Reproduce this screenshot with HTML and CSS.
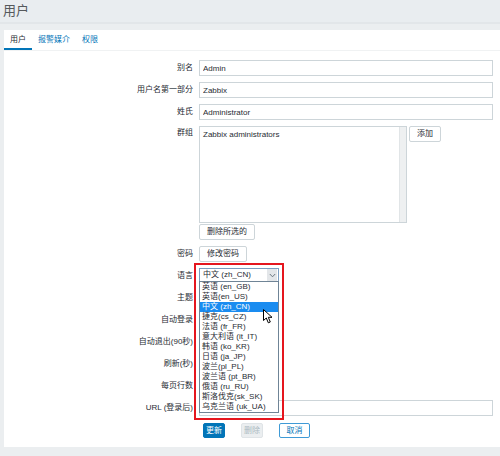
FILE: index.html
```html
<!DOCTYPE html>
<html lang="zh">
<head>
<meta charset="utf-8">
<title>用户</title>
<link rel="stylesheet" href="styles.css">
</head>
<body>
<header class="page-header">
  <h1 class="page-title">用户</h1>
</header>
<main class="panel">
  <nav class="tabs">
    <span class="tab tab-active">用户</span>
    <span class="tab">报警媒介</span>
    <span class="tab">权限</span>
  </nav>
  <form class="form">
    <div class="row">
      <label class="label">别名</label>
      <div class="field"><input class="text-input" type="text" value="Admin"></div>
    </div>
    <div class="row">
      <label class="label">用户名第一部分</label>
      <div class="field"><input class="text-input" type="text" value="Zabbix"></div>
    </div>
    <div class="row">
      <label class="label">姓氏</label>
      <div class="field"><input class="text-input" type="text" value="Administrator"></div>
    </div>
    <div class="row row-tall">
      <label class="label">群组</label>
      <div class="field field-col">
        <div class="group-line">
          <div class="listbox">
            <div class="listbox-item">Zabbix administrators</div>
            <div class="listbox-scroll"></div>
          </div>
          <button type="button" class="btn btn-add">添加</button>
        </div>
        <button type="button" class="btn btn-under">删除所选的</button>
      </div>
    </div>
    <div class="row">
      <label class="label">密码</label>
      <div class="field"><button type="button" class="btn">修改密码</button></div>
    </div>
    <div class="row">
      <label class="label">语言</label>
      <div class="field">
        <div class="select-wrap">
          <div class="select">
            <span class="select-value">中文 (zh_CN)</span>
            <span class="select-arrow">
              <svg width="7" height="5" viewBox="0 0 7 5"><polyline points="0.8,1 3.5,3.8 6.2,1" fill="none" stroke="#6b7780" stroke-width="1"/></svg>
            </span>
          </div>
          <ul class="dropdown">
            <li>英语 (en_GB)</li>
            <li>英语(en_US)</li>
            <li class="selected">中文 (zh_CN)</li>
            <li>捷克(cs_CZ)</li>
            <li>法语 (fr_FR)</li>
            <li>意大利语 (it_IT)</li>
            <li>韩语 (ko_KR)</li>
            <li>日语 (ja_JP)</li>
            <li>波兰(pl_PL)</li>
            <li>波兰语 (pt_BR)</li>
            <li>俄语 (ru_RU)</li>
            <li>斯洛伐克(sk_SK)</li>
            <li>乌克兰语 (uk_UA)</li>
          </ul>
          <div class="highlight-box"></div>
          <svg class="cursor" width="11" height="15" viewBox="0 0 11 15"><path d="M0.5 0.5 L0.5 11.5 L3.3 9 L5.3 13.8 L7.3 13 L5.3 8.3 L9 8.3 Z" fill="#fff" stroke="#000" stroke-width="1" stroke-linejoin="round"/></svg>
        </div>
      </div>
    </div>
    <div class="row">
      <label class="label">主题</label>
      <div class="field"><div class="mini-select"></div></div>
    </div>
    <div class="row">
      <label class="label">自动登录</label>
      <div class="field"><span class="checkbox"></span></div>
    </div>
    <div class="row">
      <label class="label">自动退出(90秒)</label>
      <div class="field"><span class="checkbox"></span><span class="mini-input"></span></div>
    </div>
    <div class="row">
      <label class="label">刷新(秒)</label>
      <div class="field"><span class="mini-input"></span></div>
    </div>
    <div class="row">
      <label class="label">每页行数</label>
      <div class="field"><span class="mini-input"></span></div>
    </div>
    <div class="row">
      <label class="label">URL (登录后)</label>
      <div class="field"><input class="text-input" type="text" value=""></div>
    </div>
    <div class="actions">
      <button type="button" class="btn btn-primary">更新</button>
      <button type="button" class="btn btn-disabled">删除</button>
      <button type="button" class="btn btn-outline">取消</button>
    </div>
  </form>
</main>
</body>
</html>
```

FILE: styles.css
```css
* {
  box-sizing: border-box;
}

html, body {
  margin: 0;
  padding: 0;
}

body {
  width: 500px;
  height: 456px;
  overflow: hidden;
  background: #ebeef0;
  font-family: "Liberation Sans", "Noto Sans CJK SC", sans-serif;
  font-size: 8px;
  line-height: 10px;
  color: #1f2c33;
}

.page-header {
  height: 24px;
  background: #e9edf0;
  border-bottom: 2px solid #e2e6e9;
  margin-bottom: 6px;
}

.page-title {
  margin: 0;
  padding: 3px 0 0 3px;
  font-size: 13px;
  line-height: 16px;
  font-weight: normal;
  color: #55595c;
}

.panel {
  margin-left: 4px;
  background: #fff;
  padding-bottom: 9px;
}

.tabs {
  display: flex;
  height: 21px;
  border-bottom: 1px solid #f0f2f3;
}

.tab {
  padding: 5px 6px 3px;
  height: 20px;
  color: #0275b8;
  border-bottom: 2px solid transparent;
}

.tab-active {
  color: #1f2c33;
  border-bottom-color: #0275b8;
}

.form {
  display: flex;
  flex-direction: column;
  gap: 6px;
  padding-top: 9px;
}

.row {
  display: flex;
  gap: 6px;
  min-height: 16px;
}

.label {
  width: 189px;
  flex: none;
  text-align: right;
  line-height: 16px;
  color: #1f2c33;
}

.row-tall .label {
  line-height: 14px;
}

.field {
  display: flex;
  align-items: flex-start;
  gap: 4px;
}

.field-col {
  flex-direction: column;
  gap: 1px;
}

.text-input {
  width: 294px;
  height: 16px;
  margin: 0;
  padding: 0 3px;
  border: 1px solid #cdd5d9;
  border-radius: 0;
  font: inherit;
  color: #1f2c33;
  background: #fff;
  outline: none;
}

.group-line {
  display: flex;
  gap: 2px;
  align-items: flex-start;
}

.listbox {
  position: relative;
  width: 208px;
  height: 97px;
  border: 1px solid #cdd5d9;
  background: #fff;
}

.listbox-item {
  padding: 3px 0 0 3px;
}

.listbox-scroll {
  position: absolute;
  top: 0;
  right: 0;
  width: 7px;
  height: 100%;
  background: #eef0f1;
  border-left: 1px solid #e1e5e7;
}

.btn {
  height: 16px;
  margin: 0;
  padding: 0 7px;
  border: 1px solid #cdd5d9;
  border-radius: 2px;
  background: #fff;
  font: inherit;
  line-height: 14px;
  color: #1f2c33;
  white-space: nowrap;
}

.btn-add {
  width: 32px;
  padding: 0;
}

.select-wrap {
  position: relative;
  width: 80px;
  height: 16px;
}

.select {
  display: flex;
  align-items: center;
  justify-content: space-between;
  width: 80px;
  height: 14px;
  border: 1px solid #7a9cc0;
  background: #fff;
  padding-left: 3px;
}

.select-value {
  line-height: 12px;
}

.select-arrow {
  display: flex;
  align-items: center;
  justify-content: center;
  width: 10px;
  height: 12px;
  margin-right: 1px;
  background: #e3e6e9;
}

.dropdown {
  position: absolute;
  left: 0;
  top: 13px;
  width: 80px;
  margin: 0;
  padding: 0;
  list-style: none;
  border: 1px solid #6f8496;
  background: #fff;
  z-index: 5;
}

.dropdown li {
  height: 10px;
  line-height: 10px;
  padding-left: 2px;
  white-space: nowrap;
  color: #1f2c33;
}

.dropdown li.selected {
  background: #1a8cf0;
  color: #fff;
}

.highlight-box {
  position: absolute;
  left: -5px;
  top: -5px;
  width: 90px;
  height: 157px;
  border: 2px solid #e5161e;
  z-index: 6;
  pointer-events: none;
}

.cursor {
  position: absolute;
  left: 64px;
  top: 41px;
  z-index: 7;
}

.mini-select {
  width: 70px;
  height: 14px;
  border: 1px solid #cdd5d9;
}

.checkbox {
  width: 10px;
  height: 10px;
  margin-top: 3px;
  border: 1px solid #cdd5d9;
}

.mini-input {
  width: 50px;
  height: 16px;
  border: 1px solid #cdd5d9;
}

.actions {
  display: flex;
  gap: 16px;
  margin-top: 1px;
  padding-left: 199px;
}

.actions .btn {
  height: 15px;
  padding: 0;
  line-height: 13px;
  text-align: center;
}

.btn-primary {
  width: 22px;
  background: #0275b8;
  border-color: #0275b8;
  color: #fff;
}

.btn-disabled {
  width: 22px;
  background: #ebeef0;
  border-color: #dfe4e7;
  color: #acbbc2;
}

.btn-outline {
  width: 31px;
  border-color: #3f9ad6;
  color: #0275b8;
}
```
